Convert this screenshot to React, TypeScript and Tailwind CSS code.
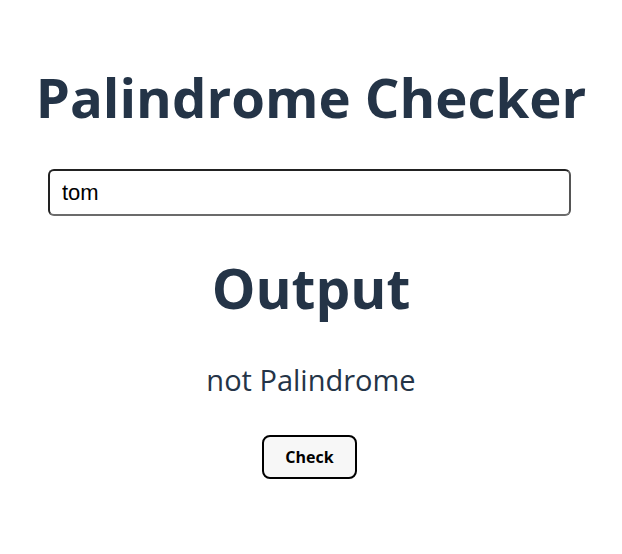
export default function App() {
  return (
    <div className="w-[622px] h-[554px] bg-white flex flex-col items-center">
      <h1 className="mt-[65px] text-[54.5px] leading-[64px] font-bold text-[#243447] font-['Open_Sans',sans-serif]">
        Palindrome Checker
      </h1>
      <input
        defaultValue="tom"
        className="mt-[40px] ml-[-3px] w-[523px] h-[47px] border-2 border-[#222222] border-b-[#6b6b6b] border-r-[#555] rounded-[6px] px-[12px] text-[22px] text-black font-['Liberation_Sans',sans-serif] outline-none"
      />
      <h2 className="mt-[40px] text-[55px] leading-[64px] font-bold text-[#243447] font-['Open_Sans',sans-serif]">
        Output
      </h2>
      <p className="mt-[42px] text-[29px] leading-[36px] text-[#243447] font-['Open_Sans',sans-serif]">
        not Palindrome
      </p>
      <button className="mt-[37px] ml-[-3px] w-[95px] h-[44px] border-2 border-black rounded-[8px] bg-[#f7f7f7] text-[16px] font-bold text-black font-['Open_Sans',sans-serif]">
        Check
      </button>
    </div>
  );
}
